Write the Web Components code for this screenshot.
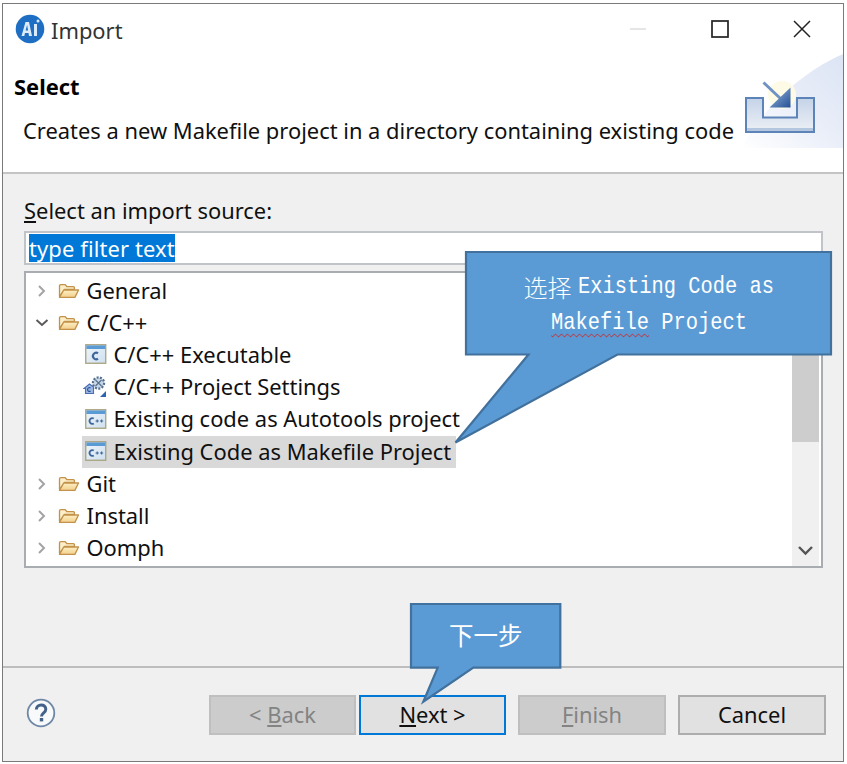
<!DOCTYPE html>
<html>
<head>
<meta charset="utf-8">
<title>Import</title>
<style>
  html, body { margin: 0; padding: 0; background: #fff; }
  body { width: 847px; height: 764px; overflow: hidden; font-family: "Noto Sans", sans-serif; }
</style>
</head>
<body>
<import-dialog>
  <tree-row slot="tree" kind="folder" arrow="right">General</tree-row>
  <tree-row slot="tree" kind="folder" arrow="down">C/C++</tree-row>
  <tree-row slot="tree" kind="c" indent>C/C++ Executable</tree-row>
  <tree-row slot="tree" kind="settings" indent>C/C++ Project Settings</tree-row>
  <tree-row slot="tree" kind="cpp" indent>Existing code as Autotools project</tree-row>
  <tree-row slot="tree" kind="cpp" indent selected>Existing Code as Makefile Project</tree-row>
  <tree-row slot="tree" kind="folder" arrow="right">Git</tree-row>
  <tree-row slot="tree" kind="folder" arrow="right">Install</tree-row>
  <tree-row slot="tree" kind="folder" arrow="right">Oomph</tree-row>

  <wiz-button slot="buttons" narrow disabled>&lt; <u>B</u>ack</wiz-button>
  <wiz-button slot="buttons" narrow focused><u>N</u>ext &gt;</wiz-button>
  <wiz-button slot="buttons" disabled class="gap"><u>F</u>inish</wiz-button>
  <wiz-button slot="buttons" class="gap">Cancel</wiz-button>
</import-dialog>

<script>
  const FOLDER = `<svg width="22" height="16" viewBox="0 0 22 16">
    <defs><linearGradient id="f" x1="0" y1="0" x2="0" y2="1"><stop offset="0" stop-color="#fdf0c4"/><stop offset="1" stop-color="#f3cf8c"/></linearGradient></defs>
    <path d="M1.500 13.500V3a1.300 1.300 0 0 1 1.300-1.300h4.400l1.800 2h6.400a1 1 0 0 1 1 1v1.600H6.600z" fill="#fbeec8" stroke="#c4914a" stroke-width="1.300" stroke-linejoin="round"/>
    <path d="M1.500 14.400 5.800 7h14.700l-3.600 7.400z" fill="url(#f)" stroke="#c4914a" stroke-width="1.300" stroke-linejoin="round"/>
  </svg>`

  const FILE_ICON = (label) => `<svg width="22" height="21" viewBox="0 0 22 21">
    <defs><linearGradient id="w" x1="0" y1="0" x2="1" y2="1"><stop offset="0" stop-color="#eef5fb"/><stop offset="1" stop-color="#cfe0f0"/></linearGradient></defs>
    <rect x=".75" y=".75" width="20" height="18.500" fill="url(#w)" stroke="#a8a27e" stroke-width="1.300"/>
    <rect x="1.400" y="1.400" width="18.800" height="3.600" fill="#5b9bd5"/>
    ${label}
  </svg>`

  const ICONS = {
    folder: FOLDER,
    c: FILE_ICON(`<path d="M13 9.200a3.300 3.300 0 1 0 0 5.600" fill="none" stroke="#3f6699" stroke-width="2.200"/>`),
    cpp: FILE_ICON(`<path d="M8.800 9.600a2.800 2.800 0 1 0 0 4.800" fill="none" stroke="#3f6699" stroke-width="1.800"/><path d="M10.600 12h3.200M12.200 10.500v3M15 12h3.200M16.600 10.500v3" stroke="#3f6699" stroke-width="1.100"/>`),
    settings: `<svg width="24" height="22" viewBox="0 0 24 22" style="margin-left:-2px">
      <circle cx="15.500" cy="7" r="5.600" fill="#c9d6e6" stroke="#54708f" stroke-width="2.200" stroke-dasharray="2 1.400"/>
      <path d="M12.500 4l6 6M18.500 4l-6 6" stroke="#54708f" stroke-width="1.100"/>
      <path d="M1 12.500 6.500 8l4 3v6.500H2.500v-5z" fill="#9db8e0" stroke="#4a6fb5" stroke-width="1.100"/>
      <path d="M7.600 12a1.900 1.900 0 1 0 0 3" fill="none" stroke="#2f55a0" stroke-width="1.200"/>
      <path d="M23 15v6h-6z" fill="#2f62b0"/>
    </svg>`
  }

  class TreeRow extends HTMLElement {
    constructor () {
      super()
      const arrow = this.getAttribute('arrow')
      const kind = this.getAttribute('kind')
      let arrowSvg = ''
      if (arrow === 'right') arrowSvg = '<svg width="10" height="14" viewBox="0 0 10 14"><path d="M2 2l5 5-5 5" fill="none" stroke="#a4a4a4" stroke-width="2"/></svg>'
      if (arrow === 'down') arrowSvg = '<svg width="14" height="10" viewBox="0 0 14 10"><path d="M1.500 2l5.500 5 5.500-5" fill="none" stroke="#5a5a5a" stroke-width="2"/></svg>'
      this.attachShadow({mode: 'open'}).innerHTML = `
        <style>
          :host { display: flex; align-items: center; height: 32.2px; font-size: 21.9px; color: #101010; white-space: nowrap; }
          .arrow { width: 31.5px; flex: none; display: flex; justify-content: center; }
          .arrow.none { width: 55.5px; }
          .icon { flex: none; width: 29px; height: 22px; display: flex; align-items: center; }
          .body { display: flex; align-items: center; height: 32px; padding-right: 5px; }
          :host([indent]) .body { padding-left: 3px; }
          :host([selected]) .body { background: #d9d9d9; }
          .text { line-height: 30px; }
        </style>
        <div class="arrow ${this.hasAttribute('indent') ? 'none' : ''}">${arrowSvg}</div>
        <div class="body"><div class="icon">${ICONS[kind]}</div><div class="text"><slot></slot></div></div>
      `
    }
  }
  customElements.define('tree-row', TreeRow)

  class WizButton extends HTMLElement {
    constructor () {
      super()
      this.attachShadow({mode: 'open'}).innerHTML = `
        <style>
          :host { display: flex; align-items: center; justify-content: center; box-sizing: border-box; width: 148px; height: 40px;
            background: #e1e1e1; border: 2px solid #adadad; font-size: 21.9px; color: #101010; }
          :host([narrow]) { width: 147px; }
          :host([disabled]) { background: #cccccc; border-color: #bfbfbf; color: #838383; }
          :host([focused]) { border-color: #0078d7; }
        </style>
        <div><slot></slot></div>
      `
    }
  }
  customElements.define('wiz-button', WizButton)

  class CallOut extends HTMLElement {
    constructor () {
      super()
      const w = +this.getAttribute('w')
      const h = +this.getAttribute('h')
      const pts = this.getAttribute('points')
      this.attachShadow({mode: 'open'}).innerHTML = `
        <style>
          :host { display: block; position: absolute; color: #fff; }
          svg { position: absolute; left: 0; top: 0; overflow: visible; }
          .label { position: absolute; left: 0; top: 0; width: ${w}px; height: ${h}px; display: flex; flex-direction: column;
            align-items: center; justify-content: center; }
        </style>
        <svg width="${w}" height="${h}"><polygon points="${pts}" fill="#5b9bd5" stroke="#41719c" stroke-width="2.2"/></svg>
        <div class="label"><slot></slot></div>
      `
    }
  }
  customElements.define('call-out', CallOut)

  class ImportDialog extends HTMLElement {
    constructor () {
      super()
      this.attachShadow({mode: 'open'}).innerHTML = `
        <style>
          :host { display: flex; flex-direction: column; position: relative; box-sizing: border-box; width: 842px; height: 759px; margin: 3px 0 0 2px;
            border: 1.5px solid #7a7a7a; background: #f0f0f0; font-family: "Noto Sans", sans-serif; color: #101010; }
          .titlebar { flex: none; height: 50px; background: #fff; display: flex; align-items: center; padding-left: 12px; font-size: 21.9px; color: #333; }
          .titlebar .logo { margin-right: 6px; }
          .titlebar .t { flex: 1; padding-top: 2px; }
          .wbtn { width: 82px; display: flex; justify-content: center; }
          .last { margin-right: 0; }
          .banner { flex: none; height: 118px; background: #fff; position: relative; border-bottom: 2px solid #c4c4c4; box-sizing: content-box; overflow: hidden; }
          .banner h1 { margin: 0; font-size: 21.9px; font-weight: 700; position: absolute; left: 11px; top: 18px; color: #000; line-height: 30px; }
          .banner p { margin: 0; font-size: 21.9px; position: absolute; left: 20px; top: 62px; line-height: 30px; white-space: nowrap; color: #101010; }
          .art { position: absolute; right: 0; top: 0; }
          .content { flex: 1; padding: 22px 20px 0 21px; box-sizing: border-box; }
          .lbl { font-size: 21.9px; line-height: 30px; height: 35px; }
          .filter { height: 34px; box-sizing: border-box; background: #fff; border: 2px solid #c0c4c8; padding: 1px 3px; font-size: 21.9px; line-height: 29px; }
          .filter span { background: #0078d7; color: #fff; display: inline-block; height: 28px; letter-spacing: .13px; }
          .tree { position: relative; margin-top: 6px; height: 297px; box-sizing: border-box; background: #fff; border: 2px solid #a9adb2; overflow: hidden; padding-top: 1.5px; }
          .scroll { position: absolute; right: 2px; top: 0; bottom: 0; width: 27px; background: #f0f0f0; }
          .thumb { position: absolute; left: 0; right: 0; top: 60px; height: 109px; background: #cdcdcd; }
          .scroll svg { position: absolute; left: 5px; bottom: 9px; }
          .footer { flex: none; height: 95px; border-top: 2px solid #bdbdbd; box-sizing: border-box; display: flex; align-items: center; padding: 0 17px 0 23px; margin-top: auto; }
          .help { flex: 1; display: flex; margin-top: -3px; }
          .buttons { display: flex; gap: 3px; }
          ::slotted(.gap) { margin-left: 9px; }
          .c1 { left: 463px; top: 248px; }
          .c2 { left: 408px; top: 599.5px; }
          .line { display: flex; align-items: center; height: 36px; white-space: nowrap; position: relative; top: 1.5px; }
          .cjk { font-family: "Noto Sans CJK SC", sans-serif; font-size: 24px; font-weight: 300; margin-right: 6px; }
          .m { display: inline-block; font-family: "Liberation Mono", monospace; font-size: 24px; transform: scaleX(.85); transform-origin: 0 50%; margin-right: -34.6px; white-space: pre; }
          .squig { text-decoration: underline wavy #d02020 1px; text-underline-offset: 4px; }
          .next { font-family: "Noto Sans CJK SC", sans-serif; font-size: 24.5px; line-height: 30px; margin-top: 1px; }
        </style>
        <div class="titlebar">
          <svg class="logo" width="30" height="30" viewBox="0 0 30 30">
            <circle cx="15" cy="15" r="14.300" fill="#1e6fc4"/>
            <path d="M6.500 22 10.500 8h3.500l3 14h-3l-.5-3H10l-.7 3zM10.600 16.500h2.500l-1-5.500z" fill="#dcebf9" fill-rule="evenodd"/>
            <rect x="19" y="10" width="3" height="12" fill="#dcebf9"/>
            <circle cx="23" cy="7" r="1.500" fill="#dcebf9"/>
          </svg>
          <span class="t">Import</span>
          <div class="wbtn"><svg width="18" height="18" viewBox="0 0 18 18"><path d="M1 9h16" stroke="#dcdcdc" stroke-width="1.500"/></svg></div>
          <div class="wbtn"><svg width="18" height="18" viewBox="0 0 18 18"><rect x="1" y="1" width="16" height="16" fill="none" stroke="#222" stroke-width="1.700"/></svg></div>
          <div class="wbtn last"><svg width="18" height="18" viewBox="0 0 18 18"><path d="M1 1l16 16M17 1L1 17" fill="none" stroke="#222" stroke-width="1.500"/></svg></div>
        </div>
        <div class="banner">
          <h1>Select</h1>
          <p>Creates a new Makefile project in a directory containing existing code</p>
          <svg class="art" width="104" height="94" viewBox="0 0 104 94">
            <defs>
              <linearGradient id="bg" x1="0" y1="1" x2="1" y2="0"><stop offset="0" stop-color="#fff"/><stop offset=".55" stop-color="#e8edf8"/><stop offset="1" stop-color="#dce4f4"/></linearGradient>
              <linearGradient id="tray" x1="0" y1="0" x2="0" y2="1"><stop offset="0" stop-color="#c4d3e8"/><stop offset="1" stop-color="#eef1f6"/></linearGradient>
              <linearGradient id="ar" x1="0" y1="0" x2="1" y2="1"><stop offset="0" stop-color="#9fbce0"/><stop offset="1" stop-color="#234f95"/></linearGradient>
            </defs>
            <path d="M2 94C30 45 70 15 104 0V94z" fill="url(#bg)"/>
            <circle cx="43" cy="41" r="14" fill="#fdfbe6"/>
            <path d="M7 44H24V63.500H58V44H75V78H7z" fill="url(#tray)" stroke="#5d84b8" stroke-width="2"/>
            <path d="M8 74H74V77H8z" fill="#7e9fc9" opacity=".5"/>
            <path d="M24.500 28.500 43 46" stroke="#6f92c2" stroke-width="3"/>
            <path d="M51.500 33.500V53.500H30.500z" fill="url(#ar)"/>
          </svg>
        </div>
        <div class="content">
          <div class="lbl"><u>S</u>elect an import source:</div>
          <div class="filter"><span>type filter text</span></div>
          <div class="tree">
            <slot name="tree"></slot>
            <div class="scroll">
              <div class="thumb"></div>
              <svg width="17" height="12" viewBox="0 0 17 12"><path d="M2 2l6.500 6.500L15 2" fill="none" stroke="#555" stroke-width="2.400"/></svg>
            </div>
          </div>
        </div>
        <div class="footer">
          <div class="help">
            <svg width="30" height="30" viewBox="0 0 30 30">
              <circle cx="15" cy="15" r="13.300" fill="#f7f9fb" stroke="#6f87a6" stroke-width="1.800"/>
              <path d="M10.300 11.500c.3-6 9.500-6 9.500-.3 0 3.600-4.300 3.600-4.300 7.300" fill="none" stroke="#44618a" stroke-width="3"/>
              <rect x="13.800" y="20" width="3.400" height="3.400" fill="#44618a"/>
            </svg>
          </div>
          <div class="buttons"><slot name="buttons"></slot></div>
        </div>
        <call-out class="c1" w="365" h="102.500" points="0,0 365,0 365,102.500 151.500,102.500 -10.500,190.500 62.500,102.500 0,102.500">
          <div class="line"><span class="cjk">选择</span><span class="m">Existing Code as</span></div>
          <div class="line"><span class="m"><span class="squig">Makefile</span> Project</span></div>
        </call-out>
        <call-out class="c2" w="149.300" h="62" points="0,0 149.300,0 149.300,63.700 62.300,63.700 12.300,97.700 26.700,63.700 0,63.700">
          <div class="next">下一步</div>
        </call-out>
      `
    }
  }
  customElements.define('import-dialog', ImportDialog)
</script>
</body>
</html>
